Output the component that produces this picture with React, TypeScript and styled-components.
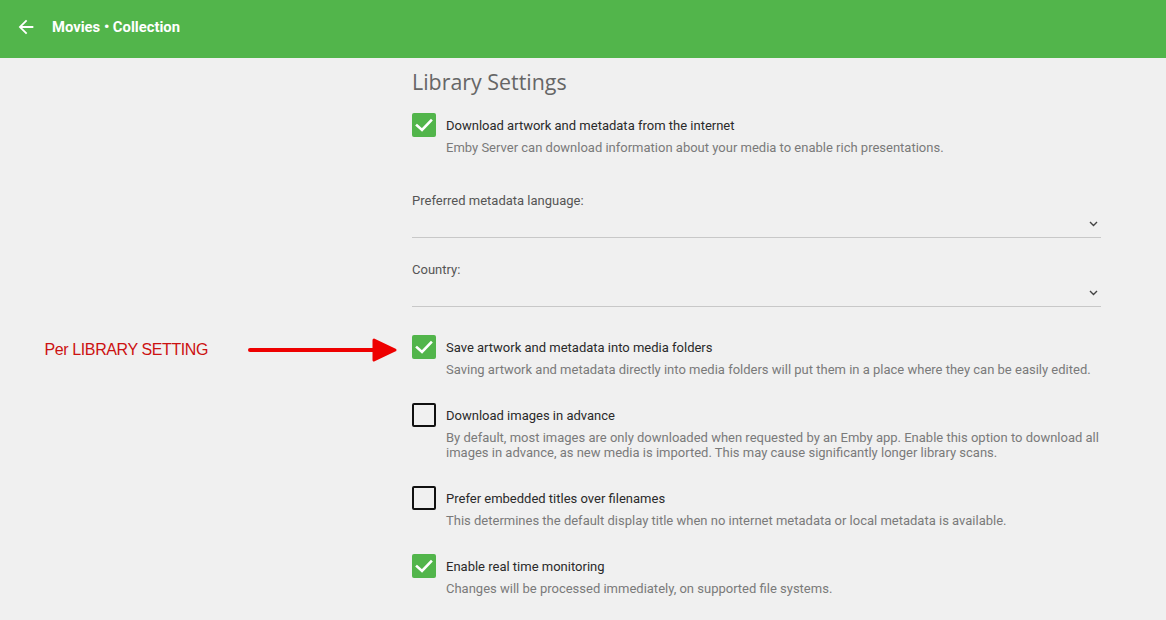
import styled, { createGlobalStyle } from "styled-components";

const GlobalStyle = createGlobalStyle`
  html, body {
    margin: 0;
    padding: 0;
    background: #f0f0f0;
  }
  body {
    font-family: Roboto, "Liberation Sans", Arial, sans-serif;
    -webkit-font-smoothing: antialiased;
  }
`;

interface OptionType {
  title: string;
  desc: string[];
  checked: boolean;
  note?: string;
}

const topOption: OptionType = {
  title: "Download artwork and metadata from the internet",
  desc: ["Emby Server can download information about your media to enable rich presentations."],
  checked: true,
};

const options: OptionType[] = [
  {
    title: "Save artwork and metadata into media folders",
    desc: ["Saving artwork and metadata directly into media folders will put them in a place where they can be easily edited."],
    checked: true,
    note: "Per LIBRARY SETTING",
  },
  {
    title: "Download images in advance",
    desc: [
      "By default, most images are only downloaded when requested by an Emby app. Enable this option to download all",
      "images in advance, as new media is imported. This may cause significantly longer library scans.",
    ],
    checked: false,
  },
  {
    title: "Prefer embedded titles over filenames",
    desc: ["This determines the default display title when no internet metadata or local metadata is available."],
    checked: false,
  },
  {
    title: "Enable real time monitoring",
    desc: ["Changes will be processed immediately, on supported file systems."],
    checked: true,
  },
];

function CheckRow({ option }: { option: OptionType }) {
  return (
    <Row>
      {option.note && (
        <Note>
          <NoteText>{option.note}</NoteText>
          <svg width="150" height="26" viewBox="0 0 150 26">
            <line x1="2" y1="13" x2="128" y2="13" stroke="#ee0000" strokeWidth="4" strokeLinecap="round" />
            <polygon points="126,3 147,13 126,23" fill="#ee0000" stroke="#ee0000" strokeWidth="3" strokeLinejoin="round" />
          </svg>
        </Note>
      )}
      <Box checked={option.checked}>
        {option.checked && (
          <svg width="24" height="24" viewBox="0 0 24 24">
            <polyline points="5,12.5 10,17 19,7.5" fill="none" stroke="#fff" strokeWidth="2.6" strokeLinecap="square" />
          </svg>
        )}
      </Box>
      <RowText>
        <RowTitle>{option.title}</RowTitle>
        <RowDesc>
          {option.desc.map((line, i) => (
            <div key={i}>{line}</div>
          ))}
        </RowDesc>
      </RowText>
    </Row>
  );
}

function SelectField({ label, first }: { label: string; first?: boolean }) {
  return (
    <Field first={first}>
      <FieldLabel>{label}</FieldLabel>
      <SelectLine>
        <svg width="9" height="6" viewBox="0 0 9 6">
          <polyline points="1,1 4.5,4.5 8,1" fill="none" stroke="#444" strokeWidth="1.4" />
        </svg>
      </SelectLine>
    </Field>
  );
}

export default function App() {
  return (
    <>
      <GlobalStyle />
      <Header>
        <BackButton>
          <svg width="22" height="22" viewBox="0 0 24 24">
            <path d="M20 11H7.83l5.59-5.59L12 4l-8 8 8 8 1.41-1.41L7.83 13H20v-2z" fill="#fff" />
          </svg>
        </BackButton>
        <HeaderTitle>Movies • Collection</HeaderTitle>
      </Header>
      <Page>
        <Content>
          <Heading>Library Settings</Heading>
          <CheckRow option={topOption} />
          <SelectField label="Preferred metadata language:" first />
          <SelectField label="Country:" />
          <Options>
            {options.map((o, i) => (
              <CheckRow key={i} option={o} />
            ))}
          </Options>
        </Content>
      </Page>
    </>
  );
}

const Header = styled.header`
  height: 58px;
  box-sizing: border-box;
  padding-bottom: 4px;
  background: #52b54b;
  display: flex;
  align-items: center;
  padding-left: 15px;
  gap: 15px;
`;

const BackButton = styled.div`
  width: 22px;
  height: 22px;
  display: flex;
  align-items: center;
  justify-content: center;
  svg {
    display: block;
  }
`;

const HeaderTitle = styled.h1`
  margin: 0;
  color: #fff;
  font-size: 14.8px;
  font-weight: 700;
`;

const Page = styled.main`
  display: grid;
  grid-template-columns: 412px 689px;
`;

const Content = styled.section`
  grid-column: 2;
  padding-top: 11px;
`;

const Heading = styled.h2`
  margin: 0 0 18px;
  font-size: 21.4px;
  line-height: 26px;
  font-weight: 400;
  color: #666;
  font-family: "Open Sans", Roboto, sans-serif;
`;

const Row = styled.div`
  position: relative;
  display: flex;
  gap: 10px;
  margin-bottom: 26px;
`;

const Box = styled.div<{ checked: boolean }>`
  flex: none;
  width: 24px;
  height: 24px;
  box-sizing: border-box;
  border-radius: 2px;
  background: ${(p) => (p.checked ? "#52b54b" : "transparent")};
  border: ${(p) => (p.checked ? "none" : "2px solid #111")};
  svg {
    display: block;
  }
`;

const RowText = styled.div`
  display: flex;
  flex-direction: column;
`;

const RowTitle = styled.div`
  font-size: 13px;
  line-height: 24px;
  padding-top: 1px;
  color: #2a2a2a;
`;

const RowDesc = styled.div`
  margin-top: 2px;
  font-size: 13px;
  line-height: 15px;
  color: #7a7a7a;
`;

const Field = styled.div<{ first?: boolean }>`
  margin-top: ${(p) => (p.first ? "37px" : "23px")};
`;

const FieldLabel = styled.div`
  font-size: 13px;
  line-height: 18px;
  color: #555;
`;

const SelectLine = styled.div`
  height: 27px;
  border-bottom: 1px solid #c8c8c8;
  display: flex;
  align-items: center;
  justify-content: flex-end;
  padding-right: 3px;
  svg {
    display: block;
  }
`;

const Options = styled.div`
  margin-top: 28px;
`;

const Note = styled.div`
  position: absolute;
  right: 100%;
  margin-right: 14px;
  top: 2px;
  display: flex;
  align-items: center;
  white-space: nowrap;
  gap: 40px;
`;

const NoteText = styled.span`
  font-family: "Liberation Sans", Arial, sans-serif;
  font-size: 16px;
  color: #cc1111;
  letter-spacing: -0.4px;
`;
